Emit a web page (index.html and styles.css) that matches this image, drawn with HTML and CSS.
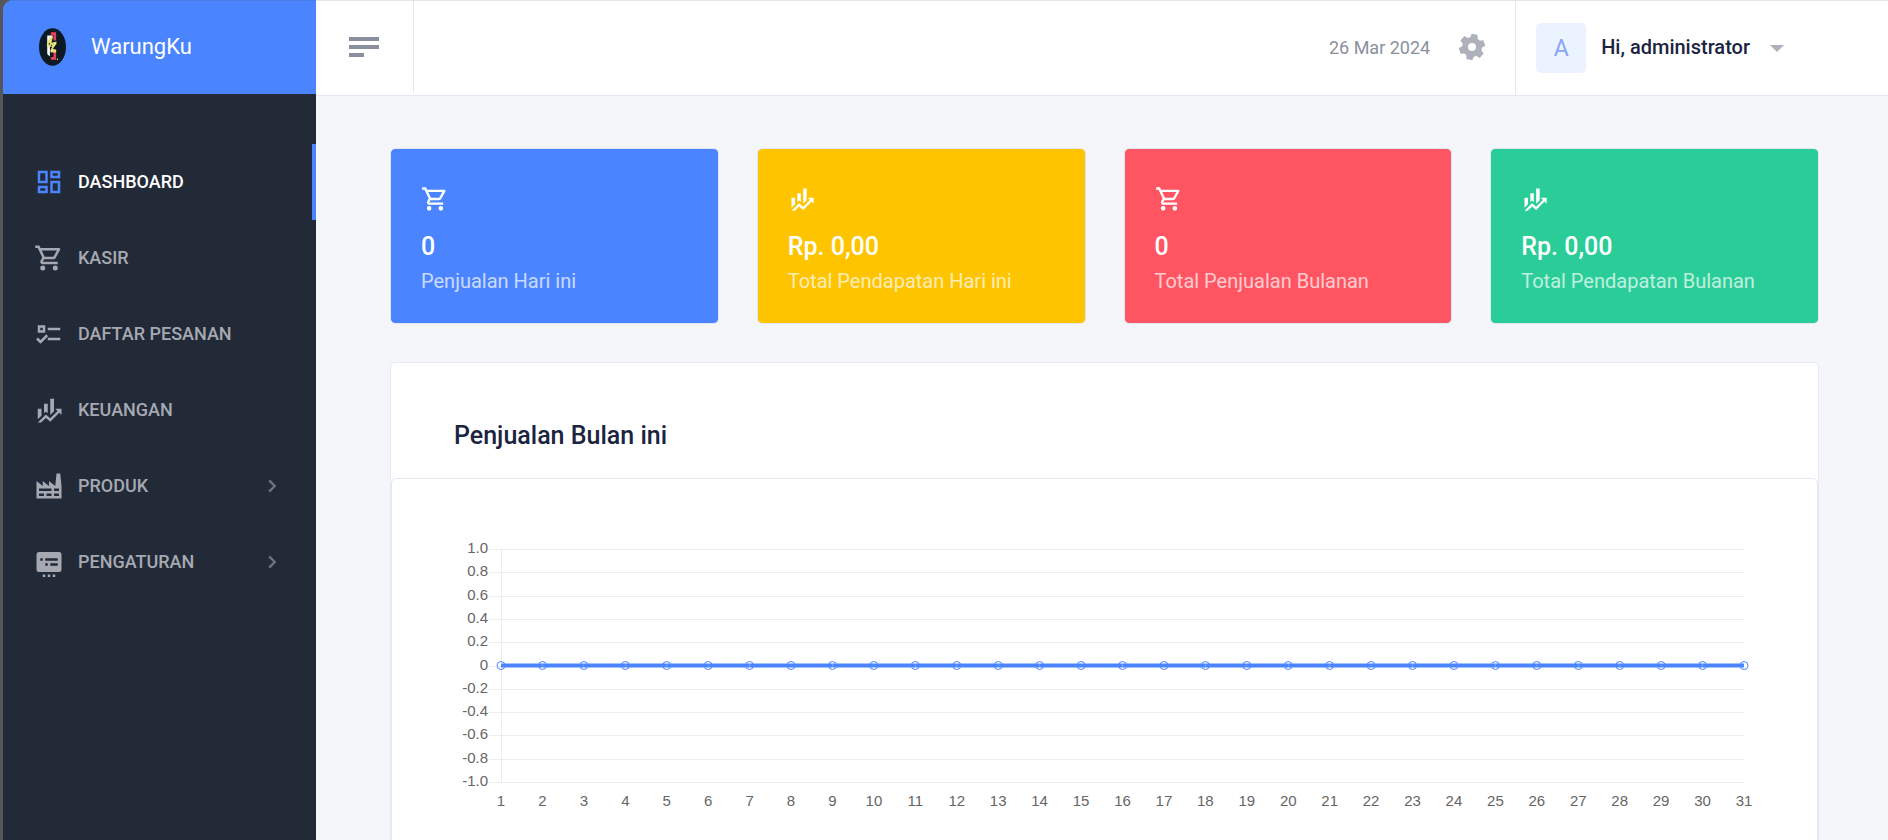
FILE: index.html
```html
<!DOCTYPE html>
<html lang="id">
<head>
<meta charset="utf-8">
<title>WarungKu</title>
<link rel="stylesheet" href="styles.css">
</head>
<body>
<svg class="sprite" aria-hidden="true">
  <symbol id="cart" viewBox="0 0 24 24"><path d="M15.55 13c.75 0 1.41-.41 1.75-1.03l3.58-6.49c.37-.66-.11-1.48-.87-1.48H5.21l-.94-2H1v2h2l3.6 7.59-1.35 2.44C4.52 15.37 5.48 17 7 17h12v-2H7l1.1-2h7.45zM6.16 6h12.15l-2.76 5H8.53L6.16 6zM7 18a2 2 0 1 0 0 4 2 2 0 0 0 0-4zm10 0a2 2 0 1 0 0 4 2 2 0 0 0 0-4z"/></symbol>
  <symbol id="finance" viewBox="0 0 24 24"><path d="M6 16.5L3 19.44V11H6M11 14.66L9.43 13.32L8 14.64V7H11M16 13L13 16V3H16M18.81 12.81L17 11H22V16L20.21 14.21L13 21.36L9.53 18.34L5.75 22H3L9.47 15.66L13 18.64"/></symbol>
</svg>
<div class="app">
  <aside class="sidebar">
    <a class="brand" href="#">
      <svg class="logo" viewBox="0 0 82 114" aria-hidden="true">
        <ellipse cx="41" cy="57" rx="41" ry="57" fill="#0d1a24"/>
        <path d="M36 12H52V37H44V21H36Z" fill="#e8405a"/>
        <path d="M44 64H52V96H36V87H44Z" fill="#e8405a"/>
        <path d="M25 22H41V31H33V86L25 78Z" fill="#fff"/>
        <path d="M34 26H42L38 44L53 40V48L42 62L52 66V74H36L34 68L40 56H24V46Z" fill="#e6e07a"/>
        <path d="M30 45H33V50H30ZM37 50H41L37 56Z" fill="#0d1a24"/>
        <circle cx="56" cy="94" r="2" fill="#fff"/>
      </svg>
      <span>WarungKu</span>
    </a>
    <nav class="menu">
      <a class="item active" href="#"><svg class="icon" viewBox="0 0 24 24"><path d="M19 5v2h-4V5h4M9 5v6H5V5h4m10 8v6h-4v-6h4M9 17v2H5v-2h4M21 3h-8v6h8V3zM11 3H3v10h8V3zm10 8h-8v10h8V11zm-10 4H3v6h8v-6z"/></svg><span>DASHBOARD</span></a>
      <a class="item" href="#"><svg class="icon"><use href="#cart"/></svg><span>KASIR</span></a>
      <a class="item" href="#"><svg class="icon" viewBox="0 0 24 24"><path d="M3 5h6v6H3zM5 7v2h2V7zM11 7h10v2H11zM11 15h10v2H11z" fill-rule="evenodd"/><path d="M2.4 15.6L5.2 18.4L10.6 13" fill="none" stroke="currentColor" stroke-width="2"/></svg><span>DAFTAR PESANAN</span></a>
      <a class="item" href="#"><svg class="icon"><use href="#finance"/></svg><span>KEUANGAN</span></a>
      <a class="item" href="#"><svg class="icon" viewBox="0 0 24 24"><path d="M4 18V20H8V18H4M4 14V16H14V14H4M10 18V20H14V18H10M16 14V16H20V14H16M16 18V20H20V18H16M2 22V8L7 12V8L12 12V8L17 12L18 2H21L22 12V22H2Z"/></svg><span>PRODUK</span><svg class="chevron" viewBox="0 0 8 12"><path d="M1 1L6 6L1 11"/></svg></a>
      <a class="item" href="#"><svg class="icon" viewBox="0 0 24 24"><path fill-rule="evenodd" d="M4 4H20A2 2 0 0 1 22 6V18A2 2 0 0 1 20 20H4A2 2 0 0 1 2 18V6A2 2 0 0 1 4 4ZM5 9V11H7V9ZM9 9V11H19V9ZM9 13V15H11V13ZM13 13V15H19V13ZM7 22H9V24H7ZM11 22H13V24H11ZM15 22H17V24H15Z"/></svg><span>PENGATURAN</span><svg class="chevron" viewBox="0 0 8 12"><path d="M1 1L6 6L1 11"/></svg></a>
    </nav>
  </aside>
  <div class="page">
    <header class="topbar">
      <button class="toggle" type="button" aria-label="Menu"><svg viewBox="0 0 30 20"><path d="M0 0H30V4H0ZM0 8H30V12H0ZM0 16H15V20H0Z"/></svg></button>
      <span class="date">26 Mar 2024</span>
      <button class="gear" type="button" aria-label="Pengaturan"><svg viewBox="-13 -13 26 26">
        <circle r="7" fill="none" stroke="currentColor" stroke-width="6"/>
        <g transform="rotate(12)">
          <path id="tooth" d="M-4 -8L-3 -13H3L4 -8Z"/>
          <use href="#tooth" transform="rotate(60)"/>
          <use href="#tooth" transform="rotate(120)"/>
          <use href="#tooth" transform="rotate(180)"/>
          <use href="#tooth" transform="rotate(240)"/>
          <use href="#tooth" transform="rotate(300)"/>
        </g>
      </svg></button>
      <button class="user" type="button"><span class="avatar">A</span><span>Hi, administrator</span><svg class="caret" viewBox="0 0 14 7"><path d="M0 0H14L7 7Z"/></svg></button>
    </header>
    <main class="content">
      <section class="stats">
        <article class="stat blue"><svg class="stat-icon"><use href="#cart"/></svg><strong>0</strong><span>Penjualan Hari ini</span></article>
        <article class="stat yellow"><svg class="stat-icon"><use href="#finance"/></svg><strong>Rp. 0,00</strong><span>Total Pendapatan Hari ini</span></article>
        <article class="stat red"><svg class="stat-icon"><use href="#cart"/></svg><strong>0</strong><span>Total Penjualan Bulanan</span></article>
        <article class="stat green"><svg class="stat-icon"><use href="#finance"/></svg><strong>Rp. 0,00</strong><span>Total Pendapatan Bulanan</span></article>
      </section>
      <section class="panel">
        <h2>Penjualan Bulan ini</h2>
        <div class="panel-body">
          <svg class="chart-axis" id="axis"></svg>
          <svg class="chart-plot" id="plot"></svg>
        </div>
      </section>
    </main>
  </div>
</div>
<script src="chart.js"></script>
</body>
</html>
```
FILE: styles.css
```css
* { box-sizing: border-box; }
body {
  margin: 0;
  background: #55565a;
  font-family: Roboto, "Liberation Sans", sans-serif;
  color: #1b2440;
  overflow: hidden;
}
a { color: inherit; text-decoration: none; }
button { font: inherit; color: inherit; background: none; border: 0; padding: 0; }
svg { fill: currentColor; flex: none; display: block; }
.sprite { display: none; }
.app {
  display: flex;
  height: 100vh;
  margin-left: 3px;
  border-radius: 10px 0 0 0;
  overflow: hidden;
  background: #f4f6fa;
}
.sidebar { width: 313px; flex: none; background: #222a38; }
.brand {
  display: flex;
  align-items: center;
  gap: 25px;
  height: 94px;
  padding: 0 0 2px 36px;
  border-top: 1px solid #4b7be5;
  background: #4b84ff;
  color: #fff;
  font-size: 22px;
}
.logo { width: 27px; height: 38px; }
.menu { padding-top: 50px; }
.item {
  display: flex;
  align-items: center;
  height: 76px;
  padding: 0 39px 0 31px;
  gap: 14px;
  font-size: 18px;
  font-weight: 500;
  color: #a6a9b1;
}
.item span { padding-bottom: 2px; }
.item.active { color: #fff; border-right: 4px solid #4b84ff; }
.item.active .icon { color: #4b84ff; }
.icon { width: 30px; height: 30px; overflow: visible; }
.chevron { width: 9px; height: 14px; margin-left: auto; fill: none; stroke: #6f7582; stroke-width: 2; }
.page { flex: 1; min-width: 0; }
.topbar {
  display: flex;
  align-items: center;
  height: 96px;
  padding-bottom: 2px;
  background: #fff;
  border-top: 1px solid #e5e5e7;
  border-bottom: 1px solid #e5e8f2;
}
.toggle {
  align-self: stretch;
  width: 98px;
  padding-left: 33px;
  border-right: 1px solid #e5e8f2;
  color: #8a8fa0;
}
.toggle svg { width: 30px; height: 20px; }
.date { margin-left: auto; font-size: 18px; color: #8a909d; }
.gear { margin: 0 30px 0 29px; color: #adb1bb; }
.gear svg { width: 26px; height: 26px; }
.user {
  display: flex;
  align-items: center;
  align-self: stretch;
  gap: 15px;
  margin-bottom: -2px;
  padding: 0 104px 0 20px;
  border-left: 1px solid #e5e8f2;
  font-size: 20px;
  font-weight: 500;
}
.user > span { margin-bottom: 2px; }
.avatar {
  display: grid;
  place-items: center;
  width: 50px;
  height: 50px;
  border-radius: 5px;
  background: #ebf3ff;
  color: #8aa4f8;
  font-size: 23px;
  font-weight: 400;
}
.user .avatar { margin-bottom: 0; }
.caret { width: 14px; height: 7px; margin-left: 5px; color: #adb1bb; }
.content { padding: 52px 69px 0 74px; }
.stats { display: grid; grid-template-columns: repeat(4, 1fr); gap: 38px; }
.stat {
  display: flex;
  flex-direction: column;
  height: 176px;
  padding: 36px 30px 0;
  border: 1px solid #e0e6f2;
  border-radius: 5px;
  background-clip: padding-box;
  color: #fff;
}
.stat-icon { width: 28px; height: 28px; }
.stat strong { margin-top: 18px; font-size: 25px; line-height: 32px; font-weight: 500; }
.stat span { margin-top: 6px; font-size: 20px; line-height: 24px; opacity: 0.7; }
.blue { background-color: #4b84ff; }
.yellow { background-color: #ffc400; }
.red { background-color: #ff5461; }
.green { background-color: #2acd97; }
.panel {
  margin-top: 38px;
  border: 1px solid #e5e9f2;
  border-radius: 5px;
  background: #fff;
}
.panel h2 { margin: 0; padding: 58px 63px 27px; font-size: 25px; line-height: 30px; font-weight: 500; }
.panel-body {
  display: flex;
  min-height: 400px;
  padding: 61px 73px 0 62px;
  border: 1px solid #e5e9f2;
  border-radius: 5px;
}
.chart-axis { width: 47px; height: 280px; }
.chart-plot { flex: 1; min-width: 0; height: 280px; overflow: visible; }
.chart-axis text, .chart-plot text { font: 15px "Liberation Sans", Arial, sans-serif; fill: #666; }
.grid { stroke: #ececec; stroke-width: 1; shape-rendering: crispEdges; }
.series { stroke: #4b84ff; stroke-width: 4; }
.dot { fill: none; stroke: #4b84ff; stroke-width: 1; }
```
FILE: chart.js
```js
const NS = 'http://www.w3.org/2000/svg';
const TOP = 9;
const HEIGHT = 233;
const ticks = ['1.0', '0.8', '0.6', '0.4', '0.2', '0', '-0.2', '-0.4', '-0.6', '-0.8', '-1.0'];
const sales = new Array(31).fill(0);
const axis = document.getElementById('axis');
const plot = document.getElementById('plot');

function add(parent, name, attrs, text) {
  const node = document.createElementNS(NS, name);
  for (const key in attrs) node.setAttribute(key, attrs[key]);
  if (text !== undefined) node.textContent = text;
  parent.appendChild(node);
}

const yOf = value => TOP + HEIGHT * (1 - value) / 2;
const xOf = index => (index * 100 / (sales.length - 1)) + '%';

ticks.forEach((label, i) => {
  const y = Math.round(TOP + HEIGHT * i / (ticks.length - 1));
  add(axis, 'text', { x: 34, y: y + 4, 'text-anchor': 'end' }, label);
  add(axis, 'line', { class: 'grid', x1: 35, x2: 47, y1: y, y2: y });
  add(plot, 'line', { class: 'grid', x1: 0, x2: '100%', y1: y, y2: y });
});
add(plot, 'line', { class: 'grid', x1: 0, x2: 0, y1: TOP, y2: TOP + HEIGHT });

sales.forEach((value, i) => {
  if (i > 0) add(plot, 'line', { class: 'series', x1: xOf(i - 1), x2: xOf(i), y1: yOf(sales[i - 1]), y2: yOf(value) });
  add(plot, 'text', { x: xOf(i), y: TOP + HEIGHT + 24, 'text-anchor': 'middle' }, i + 1);
});
sales.forEach((value, i) => add(plot, 'circle', { class: 'dot', cx: xOf(i), cy: yOf(value), r: 4 }));
```
